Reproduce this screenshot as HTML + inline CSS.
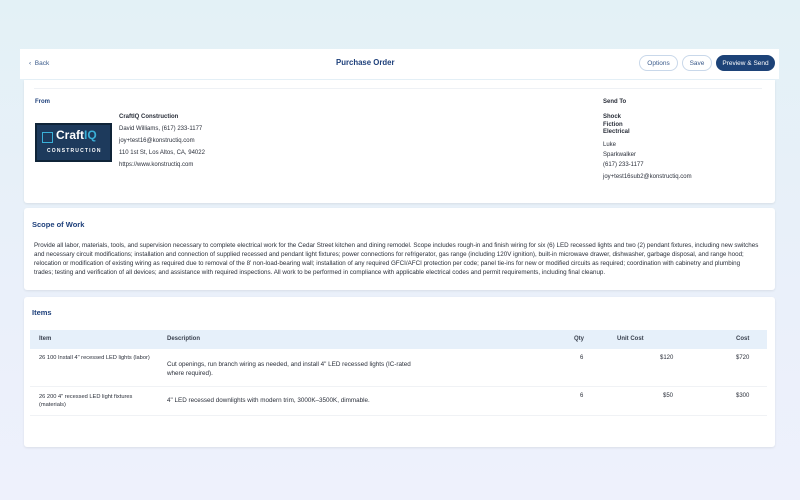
<!DOCTYPE html>
<html><head><style>
*{margin:0;padding:0;box-sizing:border-box}
body{width:800px;height:500px;overflow:hidden;background:linear-gradient(180deg,#e3f1f6 0%,#eaf0fa 60%,#eef1fc 100%);font-family:"Liberation Sans",sans-serif;color:#2a2f3a;position:relative}
.abs{position:absolute}
.hdr{left:20px;top:49px;width:759px;height:30px;background:#fff}
.card{background:#fff;border-radius:3px;box-shadow:0 1px 2px rgba(0,0,0,.08)}
.t{position:absolute;white-space:nowrap;font-size:6px}
.btn{position:absolute;top:55px;height:16px;border:1px solid #c9d8ea;border-radius:8px;font-size:6.5px;color:#3a5a8a;text-align:center;line-height:15px;background:#fff}
.blue{color:#1d3f7a}
</style></head><body>
<div class="abs hdr"></div>
<div class="t" style="left:29px;top:60px;color:#3a5a8a;font-size:6.5px">‹ &nbsp;Back</div>
<div class="t blue" style="left:336px;top:58px;font-size:7.8px;font-weight:bold">Purchase Order</div>
<div class="btn" style="left:639px;width:39px">Options</div>
<div class="btn" style="left:682px;width:30px">Save</div>
<div class="btn" style="left:716px;width:59px;background:#1d4378;border-color:#1d4378;color:#fff">Preview &amp; Send</div>

<div class="abs card" style="left:24px;top:80px;width:751px;height:123px;border-radius:0 0 3px 3px"></div>
<div class="abs" style="left:34px;top:88px;width:728px;height:1px;background:#eef1f5"></div>
<div class="t blue" style="left:35px;top:99px;font-weight:bold">From</div>
<div class="abs" style="left:35px;top:123px;width:77px;height:39px;background:#1d3a5c;border:2px solid #0f2438">
 <div class="abs" style="left:5px;top:7px;width:11px;height:11px;border:1.5px solid #3ab0d8"></div>
 <div class="t" style="left:19px;top:3px;font-size:12px;font-weight:bold;color:#fff">Craft<span style="color:#3ab0d8">IQ</span></div>
 <div class="t" style="left:10px;top:23px;font-size:5px;letter-spacing:1.2px;color:#fff;font-weight:bold">CONSTRUCTION</div>
</div>
<div class="t" style="left:119px;top:114px;font-weight:bold">CraftIQ Construction</div>
<div class="t" style="left:119px;top:126px">David Williams, (617) 233-1177</div>
<div class="t" style="left:119px;top:138px">joy+test16@konstructiq.com</div>
<div class="t" style="left:119px;top:150px">110 1st St, Los Altos, CA, 94022</div>
<div class="t" style="left:119px;top:162px">https://www.konstructiq.com</div>
<div class="t" style="left:603px;top:99px;font-weight:bold">Send To</div>
<div class="t" style="left:603px;top:114px;font-weight:bold;line-height:7.5px">Shock<br>Fiction<br>Electrical</div>
<div class="t" style="left:603px;top:141px;line-height:9.5px">Luke<br>Sparkwalker</div>
<div class="t" style="left:603px;top:162px">(617) 233-1177</div>
<div class="t" style="left:603px;top:174px">joy+test16sub2@konstructiq.com</div>

<div class="abs card" style="left:24px;top:208px;width:751px;height:82px"></div>
<div class="t blue" style="left:32px;top:220px;font-size:7.5px;font-weight:bold">Scope of Work</div>
<div class="t" style="left:34px;top:241px;line-height:9px;font-size:6.25px">Provide all labor, materials, tools, and supervision necessary to complete electrical work for the Cedar Street kitchen and dining remodel. Scope includes rough-in and finish wiring for six (6) LED recessed lights and two (2) pendant fixtures, including new switches<br>and necessary circuit modifications; installation and connection of supplied recessed and pendant light fixtures; power connections for refrigerator, gas range (including 120V ignition), built-in microwave drawer, dishwasher, garbage disposal, and range hood;<br>relocation or modification of existing wiring as required due to removal of the 8' non-load-bearing wall; installation of any required GFCI/AFCI protection per code; panel tie-ins for new or modified circuits as required; coordination with cabinetry and plumbing<br>trades; testing and verification of all devices; and assistance with required inspections. All work to be performed in compliance with applicable electrical codes and permit requirements, including final cleanup.</div>

<div class="abs card" style="left:24px;top:297px;width:751px;height:150px"></div>
<div class="t blue" style="left:32px;top:308px;font-size:7.5px;font-weight:bold">Items</div>
<div class="abs" style="left:30px;top:330px;width:737px;height:19px;background:#e6f0fa"></div>
<div class="abs" style="left:30px;top:386px;width:737px;height:1px;background:#f0f2f5"></div>
<div class="abs" style="left:30px;top:415px;width:737px;height:1px;background:#f0f2f5"></div>
<div class="t" style="left:39px;top:336px;font-weight:bold;color:#3a4250">Item</div>
<div class="t" style="left:167px;top:336px;font-weight:bold;color:#3a4250">Description</div>
<div class="t" style="left:574px;top:336px;font-weight:bold;color:#3a4250">Qty</div>
<div class="t" style="left:617px;top:336px;font-weight:bold;color:#3a4250">Unit Cost</div>
<div class="t" style="left:736px;top:336px;font-weight:bold;color:#3a4250">Cost</div>
<div class="t" style="left:39px;top:355px;font-size:5.7px">26 100 Install 4" recessed LED lights (labor)</div>
<div class="t" style="left:167px;top:360px;line-height:9px;font-size:6.3px">Cut openings, run branch wiring as needed, and install 4" LED recessed lights (IC-rated<br>where required).</div>
<div class="t" style="left:580px;top:355px">6</div>
<div class="t" style="left:660px;top:355px">$120</div>
<div class="t" style="left:736px;top:355px">$720</div>
<div class="t" style="left:39px;top:393px;font-size:5.7px;line-height:8px">26 200 4" recessed LED light fixtures<br>(materials)</div>
<div class="t" style="left:167px;top:397px;font-size:6.3px">4" LED recessed downlights with modern trim, 3000K–3500K, dimmable.</div>
<div class="t" style="left:580px;top:393px">6</div>
<div class="t" style="left:663px;top:393px">$50</div>
<div class="t" style="left:736px;top:393px">$300</div>
</body></html>
